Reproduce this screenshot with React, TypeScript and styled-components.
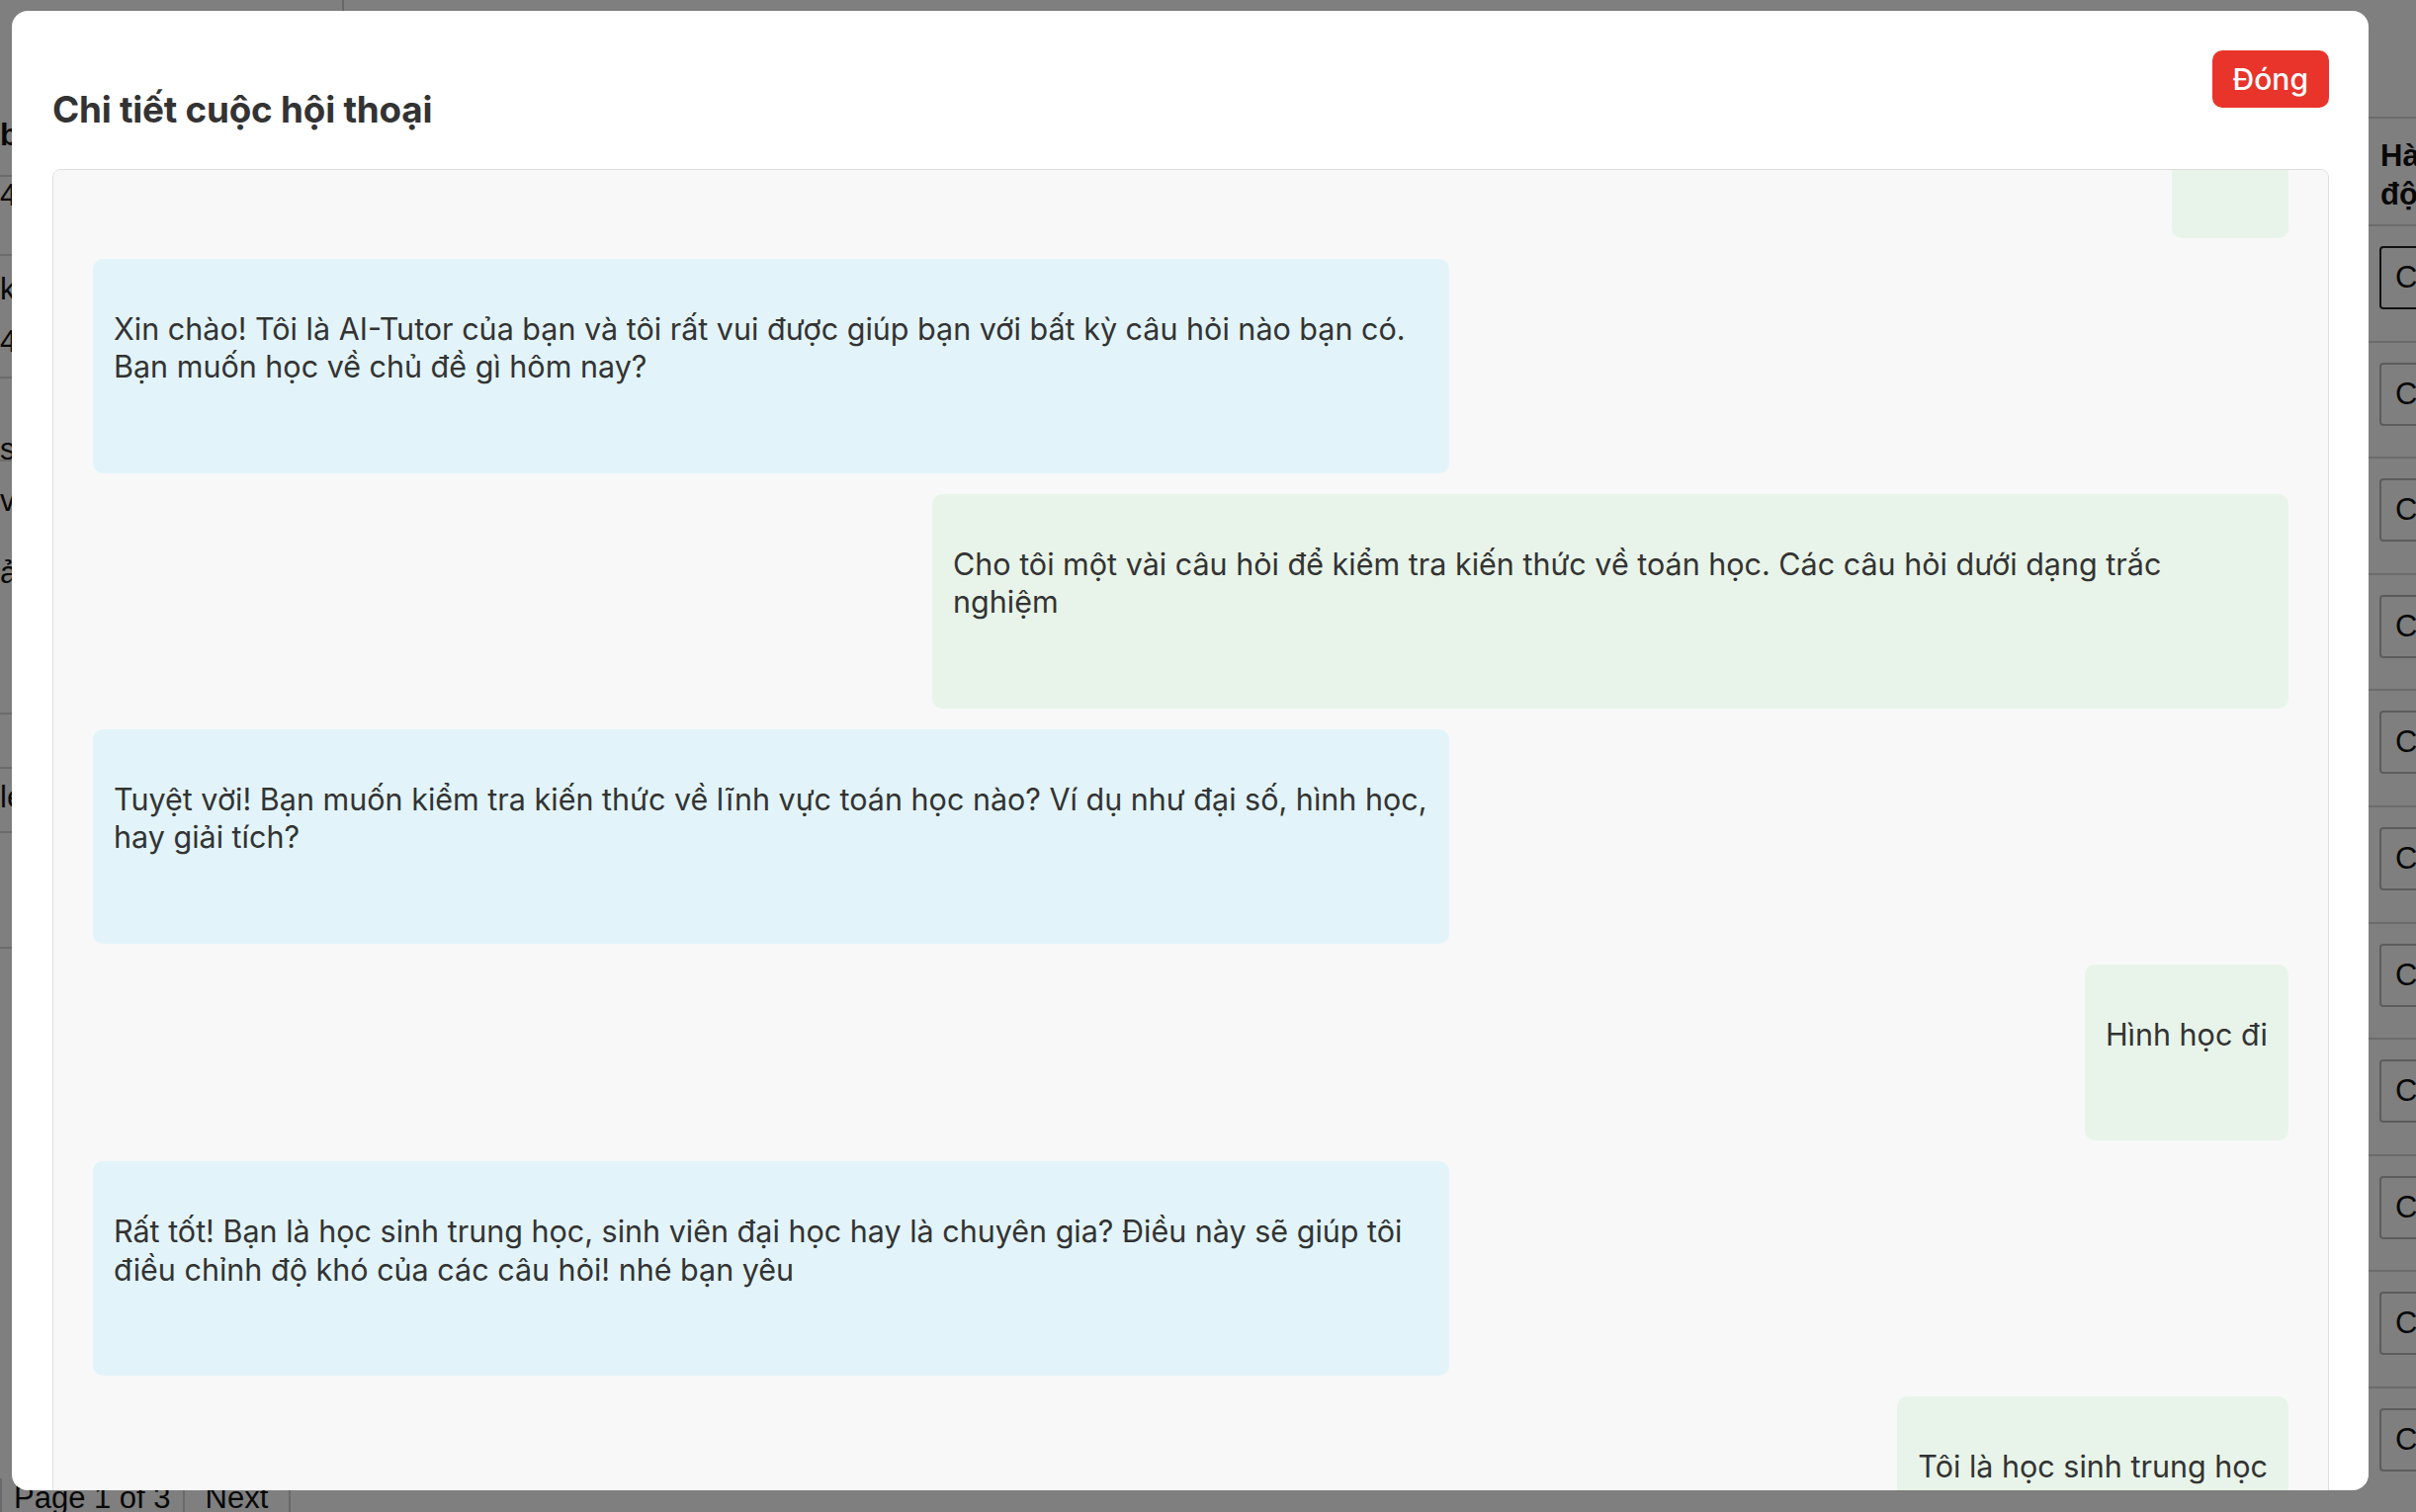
import React, { useLayoutEffect, useRef } from 'react';
import styled, { createGlobalStyle } from 'styled-components';

type Role = 'user' | 'assistant';

interface Message {
  role: Role;
  text: string;
}

// line breaks follow the wrapping seen in the original conversation view
const messages: Message[] = [
  { role: 'user', text: 'Chào' },
  {
    role: 'assistant',
    text: 'Xin chào! Tôi là AI-Tutor của bạn và tôi rất vui được giúp bạn với bất kỳ câu hỏi nào bạn có.\nBạn muốn học về chủ đề gì hôm nay?',
  },
  {
    role: 'user',
    text: 'Cho tôi một vài câu hỏi để kiểm tra kiến thức về toán học. Các câu hỏi dưới dạng trắc\nnghiệm',
  },
  {
    role: 'assistant',
    text: 'Tuyệt vời! Bạn muốn kiểm tra kiến thức về lĩnh vực toán học nào? Ví dụ như đại số, hình học,\nhay giải tích?',
  },
  { role: 'user', text: 'Hình học đi' },
  {
    role: 'assistant',
    text: 'Rất tốt! Bạn là học sinh trung học, sinh viên đại học hay là chuyên gia? Điều này sẽ giúp tôi\nđiều chỉnh độ khó của các câu hỏi! nhé bạn yêu',
  },
  { role: 'user', text: 'Tôi là học sinh trung học' },
  {
    role: 'assistant',
    text: 'Tuyệt! Dưới đây là một số câu hỏi trắc nghiệm về hình học dành cho học sinh trung học.',
  },
];

const leftRows = [
  { height: 179, top: 118, gap: 0, lines: ['bot'], bold: true },
  { height: 80, top: 0, gap: 0, lines: ['4,5'], bold: false },
  { height: 124, top: 15, gap: 15, lines: ['kiểm', '4 câu'], bold: false },
  { height: 84, top: 53, gap: 0, lines: ['sách'], bold: false },
  { height: 256, top: 21, gap: 35, lines: ['vẽ', 'ảnh'], bold: false },
  { height: 55, top: 8, gap: 0, lines: [''], bold: false },
  { height: 65, top: 10, gap: 0, lines: ['le'], bold: false },
  { height: 117, top: 40, gap: 0, lines: [''], bold: false },
];

const actionRows = Array.from({ length: 11 }, (_, i) => i);

const GlobalStyle = createGlobalStyle`
  html, body {
    margin: 0;
    padding: 0;
    overflow: hidden;
  }
  body {
    background: #ffffff;
    font-family: "Liberation Sans", Arial, sans-serif;
  }
  * {
    box-sizing: border-box;
  }
`;

/* ---------- page behind the dialog ---------- */

const Page = styled.div`
  display: flex;
  flex-direction: column;
  width: 2700px;
  height: 1530px;
  overflow: hidden;
  color: #111;
  font-size: 31px;
`;

const PageBody = styled.div`
  display: flex;
  flex: 1;
  min-height: 0;
  overflow: hidden;
`;

const LeftColumn = styled.div`
  width: 348px;
  border-right: 2px solid #cfcfcf;
  display: flex;
  flex-direction: column;
`;

const LeftRow = styled.div<{ $h: number; $top: number; $gap: number; $bold: boolean }>`
  flex-shrink: 0;
  height: ${p => p.$h}px;
  padding-top: ${p => p.$top}px;
  border-bottom: 2px solid #d6d6d6;
  font-weight: ${p => (p.$bold ? 700 : 400)};
  line-height: 38px;
  display: flex;
  flex-direction: column;
  gap: ${p => p.$gap}px;
`;

const Spacer = styled.div`
  flex: 1;
`;

const ActionColumn = styled.div`
  width: 304px;
  padding-top: 118px;
  display: flex;
  flex-direction: column;
`;

const ActionHeader = styled.div`
  flex-shrink: 0;
  height: 111px;
  border-top: 2px solid #d6d6d6;
  border-bottom: 2px solid #d6d6d6;
  padding: 18px 12px 0;
  font-weight: 700;
  font-size: 31px;
  line-height: 39px;
`;

const ActionRow = styled.div`
  flex-shrink: 0;
  height: 117.6px;
  border-bottom: 2px solid #d6d6d6;
  padding: 20px 11px 0;
`;

const DetailButton = styled.button<{ $focused: boolean }>`
  height: 64px;
  padding: 0 14px;
  background: #ffffff;
  border: 2px solid ${p => (p.$focused ? '#222' : '#b8b8b8')};
  border-radius: 4px;
  font-family: "Liberation Sans", Arial, sans-serif;
  font-size: 31px;
  color: #111;
`;

const Pagination = styled.div`
  flex-shrink: 0;
  display: flex;
  height: 34px;
  font-size: 31px;
  line-height: 40px;
`;

const PageItem = styled.div<{ $pad: number }>`
  height: 44px;
  padding: 0 ${p => p.$pad}px;
  border-left: 2px solid #d4d4d4;
  &:last-child {
    border-right: 2px solid #d4d4d4;
  }
`;

/* ---------- dialog ---------- */

const Overlay = styled.div`
  position: fixed;
  inset: 0;
  background: rgba(0, 0, 0, 0.5);
  display: flex;
  align-items: flex-start;
`;

const Modal = styled.div`
  margin: 11px 0 0 12px;
  width: 2384px;
  height: 1497px;
  background: #ffffff;
  border-radius: 16px;
  padding: 40px 40px 0 41px;
  display: flex;
  flex-direction: column;
  overflow: hidden;
  font-family: Inter, "Noto Sans", sans-serif;
`;

const ModalHeader = styled.div`
  display: flex;
  justify-content: space-between;
  align-items: flex-start;
  margin-bottom: 38px;
`;

const Title = styled.h2`
  margin: 38px 0 0;
  font-size: 36.8px;
  line-height: 44px;
  font-weight: 700;
  color: #333;
  letter-spacing: -0.2px;
`;

const CloseButton = styled.button`
  height: 58px;
  padding: 0 21px;
  border: none;
  border-radius: 10px;
  background: #e8342a;
  color: #ffffff;
  font-family: Inter, "Noto Sans", sans-serif;
  font-size: 30px;
  font-weight: 500;
  cursor: pointer;
`;

const ChatBox = styled.div`
  flex-shrink: 0;
  height: 1400px;
  background: #f8f8f8;
  border: 1px solid #dedede;
  border-radius: 8px;
  overflow-y: auto;
  scrollbar-width: none;
  &::-webkit-scrollbar {
    display: none;
  }
`;

const MessageList = styled.div`
  display: flex;
  flex-direction: column;
  gap: 21px;
  padding: 20px 40px;
`;

const Bubble = styled.div<{ $role: Role; $wide: boolean }>`
  align-self: ${p => (p.$role === 'user' ? 'flex-end' : 'flex-start')};
  width: ${p => (p.$wide ? '1372px' : 'auto')};
  max-width: 1372px;
  padding: 19px 21px 61px;
  border-radius: 10px;
  background: ${p => (p.$role === 'user' ? '#e8f4e9' : '#e2f4f9')};
`;

const BubbleText = styled.p`
  margin: 33px 0 27px;
  font-size: 30.5px;
  line-height: 38.5px;
  color: #333;
  white-space: pre-line;
`;

const App: React.FC = () => {
  const chatRef = useRef<HTMLDivElement>(null);

  useLayoutEffect(() => {
    if (chatRef.current) chatRef.current.scrollTop = 130;
  }, []);

  return (
    <>
      <GlobalStyle />
      <Page>
        <PageBody>
          <LeftColumn>
            {leftRows.map((row, i) => (
              <LeftRow key={i} $h={row.height} $top={row.top} $gap={row.gap} $bold={row.bold}>
                {row.lines.map((line, j) => (
                  <span key={j}>{line}</span>
                ))}
              </LeftRow>
            ))}
          </LeftColumn>
          <Spacer />
          <ActionColumn>
            <ActionHeader>
              Hành
              <br />
              động
            </ActionHeader>
            {actionRows.map(i => (
              <ActionRow key={i}>
                <DetailButton $focused={i === 0}>Chi tiết</DetailButton>
              </ActionRow>
            ))}
          </ActionColumn>
        </PageBody>
        <Pagination>
          <PageItem $pad={12}>Page 1 of 3</PageItem>
          <PageItem $pad={21}>Next</PageItem>
        </Pagination>
      </Page>

      <Overlay>
        <Modal>
          <ModalHeader>
            <Title>Chi tiết cuộc hội thoại</Title>
            <CloseButton>Đóng</CloseButton>
          </ModalHeader>
          <ChatBox ref={chatRef}>
            <MessageList>
              {messages.map((m, i) => (
                <Bubble key={i} $role={m.role} $wide={m.text.includes('\n')}>
                  <BubbleText>{m.text}</BubbleText>
                </Bubble>
              ))}
            </MessageList>
          </ChatBox>
        </Modal>
      </Overlay>
    </>
  );
};

export default App;
